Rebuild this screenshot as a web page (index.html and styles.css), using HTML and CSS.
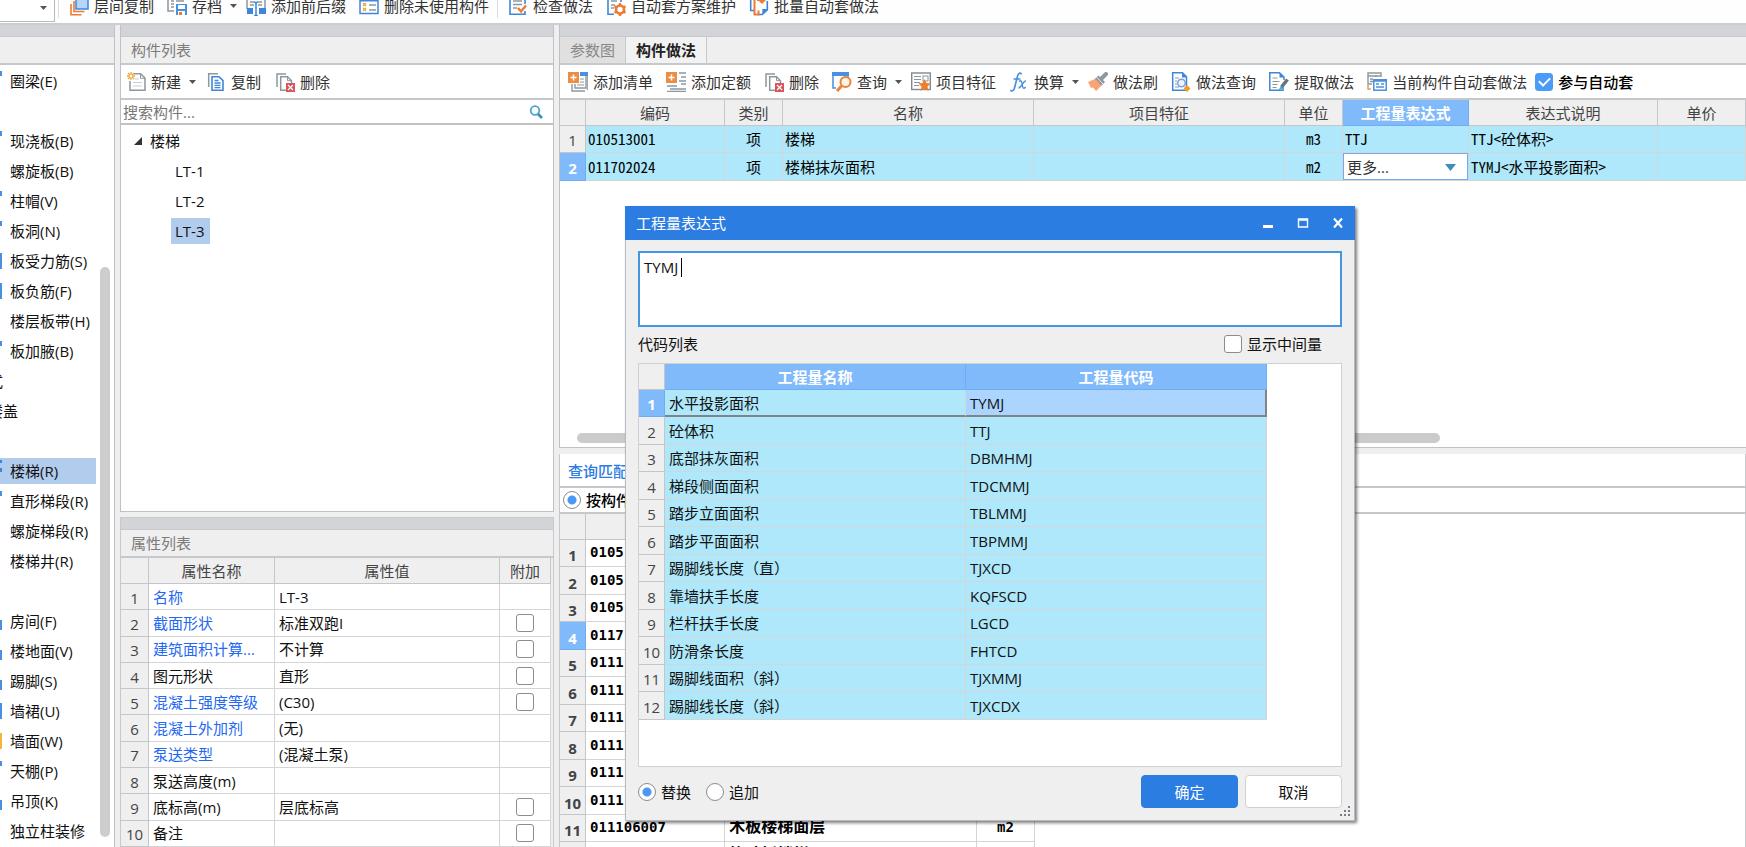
FILE: index.html
```html
<!DOCTYPE html>
<html lang="zh-CN">
<head>
<meta charset="utf-8">
<title>构件做法</title>
<link rel="stylesheet" href="styles.css">
</head>
<body>
<svg class="defs" aria-hidden="true">
  <symbol id="i-delete" viewBox="0 0 20 20"><path d="M2 15V2h9" fill="none" stroke="#8d979e" stroke-width="1.5"/><path d="M5.700 4.700h6.800l4 4v9.600H5.700z" fill="#fff" stroke="#8d979e" stroke-width="1.500"/><path d="M12.500 4.700v4h4" fill="none" stroke="#8d979e"/><rect x="11" y="11" width="9" height="9" fill="#d9535a"/><path d="M13 13l5 5m0-5l-5 5" stroke="#fff" stroke-width="1.200"/></symbol>
  <symbol id="i-caret" viewBox="0 0 7 4"><path d="M0 0h7L3.500 4z" fill="#555"/></symbol>
</svg>
<div class="app">
  <header class="topbar">
    <div class="combo"><svg class="caret"><use href="#i-caret"/></svg></div>
    <span class="sep"></span>
    <button class="tool"><svg class="icon" viewBox="0 0 20 20"><rect x="7" y="1" width="12" height="12" fill="#b5d5fa" stroke="#3f86da" stroke-width="1.500"/><path d="M5 5v10.500h10.500M2 8v10.800h10.500" fill="none" stroke="#ec7b35" stroke-width="1.600"/></svg>层间复制</button>
    <button class="tool has-menu"><svg class="icon" viewBox="0 0 20 20"><path d="M1 0v15h6M4 5h3M4 8h3M4 11h3M9 5h8" fill="none" stroke="#8d979e" stroke-width="1.500"/><rect x="9" y="8" width="11" height="11" fill="#4a8fe0"/><rect x="11" y="9" width="7" height="4" fill="#fff"/><rect x="11" y="15" width="7" height="4" fill="#fff"/><rect x="12" y="16" width="3" height="3" fill="#ec7b35"/></svg>存档<svg class="caret"><use href="#i-caret"/></svg></button>
    <button class="tool"><svg class="icon" viewBox="0 0 20 20"><path d="M1 0v13M4 6h4M4 9h4M19 0v12M12 6h4M12 9h4" stroke="#8d979e" stroke-width="1.500"/><path d="M1 12h6v6H1zM13 12h7v6h-7z" fill="#3f86da"/><path d="M8 6c2 0 2 1 2 2v10c0 1 0 2-2 2m4-14c-2 0-2 1-2 2v10c0 1 0 2 2 2" fill="none" stroke="#3f86da" stroke-width="1.500"/></svg>添加前后缀</button>
    <button class="tool"><svg class="icon" viewBox="0 0 20 20"><rect x="1" y="2" width="18" height="15.500" fill="#fff" stroke="#3f86da" stroke-width="1.500"/><path d="M1 4h18" stroke="#3f86da" stroke-width="3"/><path d="M10 9h7M10 14h7" stroke="#8d979e" stroke-width="1.500"/><path d="M4 7l3 3m0-3l-3 3M4 12l3 3m0-3l-3 3" stroke="#f0a030" stroke-width="1.200"/></svg>删除未使用构件</button>
    <span class="sep"></span>
    <button class="tool"><svg class="icon" viewBox="0 0 20 20"><path d="M2 0v18.300h15V15M17 0v8" fill="none" stroke="#3f86da" stroke-width="1.600"/><path d="M5 5h9M5 8.500h9M5 12h4" stroke="#8d979e" stroke-width="1.500"/><path d="M10 12l3 3.500 5-6" fill="none" stroke="#ec7b35" stroke-width="2.400"/></svg>检查做法</button>
    <button class="tool"><svg class="icon" viewBox="0 0 20 20"><path d="M2 0v18.300h6M15 0v6" fill="none" stroke="#3f86da" stroke-width="1.600"/><path d="M5 5h6M5 9h4M5 12h3" stroke="#8d979e" stroke-width="1.500"/><circle cx="14" cy="13.500" r="4" fill="none" stroke="#ec7b35" stroke-width="2.600"/><path d="M14 7v2.500M14 17.500V20M8.500 10.300l2 1.200M17.500 15.500l2 1.200M8.500 16.700l2-1.200M17.500 11.500l2-1.200" stroke="#ec7b35" stroke-width="2.400"/></svg>自动套方案维护</button>
    <button class="tool"><svg class="icon" viewBox="0 0 20 20"><path d="M1.700 0v14.500H5M18.300 5v9l-5 4.500H9" fill="none" stroke="#3f86da" stroke-width="1.600"/><path d="M18.500 13h-5.200v5.500z" fill="#3f86da"/><path d="M5.500 0v18.500h4v-4M8 4h7" fill="none" stroke="#ec7b35" stroke-width="2"/><path d="M13 0l4 4-4 4-4-4z" fill="#ec7b35"/></svg>批量自动套做法</button>
  </header>

  <main class="work">
    <nav class="cats">
      <div class="strip"></div>
      <div class="title"></div>
      <ul class="cat-list">
        <li><i class="chip top"></i>圈梁(E)</li>
        <li></li>
        <li><i class="chip top"></i>现浇板(B)</li>
        <li>螺旋板(B)</li>
        <li><i class="chip top"></i>柱帽(V)</li>
        <li><i class="chip top"></i>板洞(N)</li>
        <li><i class="chip full"></i>板受力筋(S)</li>
        <li><i class="chip full"></i>板负筋(F)</li>
        <li>楼层板带(H)</li>
        <li><i class="chip top"></i>板加腋(B)</li>
        <li class="group">装配式</li>
        <li class="group">空心楼盖</li>
        <li></li>
        <li class="on"><i class="chip dots"></i>楼梯(R)</li>
        <li><i class="chip top"></i>直形梯段(R)</li>
        <li>螺旋梯段(R)</li>
        <li>楼梯井(R)</li>
        <li></li>
        <li><i class="chip low"></i>房间(F)</li>
        <li><i class="chip low"></i>楼地面(V)</li>
        <li><i class="chip low"></i>踢脚(S)</li>
        <li><i class="chip full"></i>墙裙(U)</li>
        <li><i class="chip gold"></i>墙面(W)</li>
        <li><i class="chip top"></i>天棚(P)</li>
        <li><i class="chip low"></i>吊顶(K)</li>
        <li>独立柱装修</li>
      </ul>
      <span class="vbar"></span>
    </nav>

    <div class="mid">
      <section class="comps">
        <div class="strip"></div>
        <h2 class="title">构件列表</h2>
        <div class="tools wide">
          <button class="tool has-menu"><svg class="icon" viewBox="0 0 20 20"><path d="M4 9v9.300h15V6l-4.500-4.300H8" fill="#fff" stroke="#8d979e" stroke-width="1.500"/><path d="M14.500 2v4.300H19" fill="none" stroke="#8d979e"/><path d="M9 7h4M7 10.500h9M7 14h9" stroke="#c9ced2"/><path d="M5 0v8M1 4h8M2 1l6 6M8 1L2 7" stroke="#f0a030" stroke-width="1.300"/><circle cx="5" cy="4" r="1.500" fill="#fff"/></svg>新建<svg class="caret"><use href="#i-caret"/></svg></button>
          <button class="tool"><svg class="icon" viewBox="0 0 20 20"><path d="M2.700 15V1.700H12" fill="none" stroke="#8d979e" stroke-width="1.500"/><path d="M6 4.700h7l4 4v9.600H6z" fill="#fff" stroke="#3f86da" stroke-width="1.600"/><path d="M8.500 8.500h4M8.500 11h6M8.500 13.300h6M8.500 15.700h6" stroke="#3f86da" stroke-width="1.300"/></svg>复制</button>
          <button class="tool"><svg class="icon"><use href="#i-delete"/></svg>删除</button>
        </div>
        <label class="search"><input type="text" placeholder="搜索构件..." aria-label="搜索构件"><svg class="lens" viewBox="0 0 14 14"><circle cx="6" cy="5.500" r="4.300" fill="none" stroke="#4fa3cf" stroke-width="1.800"/><path d="M9 9l4 4" stroke="#3b8fbe" stroke-width="2.600"/></svg></label>
        <div class="tree">
          <div class="root"><svg class="tri" viewBox="0 0 8 8"><path d="M8 0v8H0z" fill="#333"/></svg>楼梯</div>
          <div class="leaf"><span>LT-1</span></div>
          <div class="leaf"><span>LT-2</span></div>
          <div class="leaf"><span class="on">LT-3</span></div>
        </div>
      </section>

      <section class="props">
        <div class="strip"></div>
        <h2 class="title">属性列表</h2>
        <div class="props-body">
        <table class="grid prop-grid">
          <colgroup><col class="w28"><col class="w126"><col><col class="w51"></colgroup>
          <thead><tr><th></th><th>属性名称</th><th>属性值</th><th>附加</th></tr></thead>
          <tbody>
            <tr><th>1</th><td class="link">名称</td><td>LT-3</td><td></td></tr>
            <tr><th>2</th><td class="link">截面形状</td><td>标准双跑I</td><td class="c"><input type="checkbox" aria-label="截面形状附加"></td></tr>
            <tr><th>3</th><td class="link">建筑面积计算...</td><td>不计算</td><td class="c"><input type="checkbox" aria-label="建筑面积计算附加"></td></tr>
            <tr><th>4</th><td>图元形状</td><td>直形</td><td class="c"><input type="checkbox" aria-label="图元形状附加"></td></tr>
            <tr><th>5</th><td class="link">混凝土强度等级</td><td>(C30)</td><td class="c"><input type="checkbox" aria-label="混凝土强度等级附加"></td></tr>
            <tr><th>6</th><td class="link">混凝土外加剂</td><td>(无)</td><td></td></tr>
            <tr><th>7</th><td class="link">泵送类型</td><td>(混凝土泵)</td><td></td></tr>
            <tr><th>8</th><td>泵送高度(m)</td><td></td><td></td></tr>
            <tr><th>9</th><td>底标高(m)</td><td>层底标高</td><td class="c"><input type="checkbox" aria-label="底标高附加"></td></tr>
            <tr><th>10</th><td>备注</td><td></td><td class="c"><input type="checkbox" aria-label="备注附加"></td></tr>
          </tbody>
        </table>
        </div>
      </section>
    </div>

    <div class="right">
      <section class="methods">
        <div class="strip"></div>
        <div class="tabs"><button class="tab">参数图</button><button class="tab current">构件做法</button></div>
        <div class="tools">
          <button class="tool"><svg class="icon" viewBox="0 0 20 20"><path d="M12 2h7.300v16" fill="none" stroke="#8d979e"/><path d="M12 0h8v4h-8z" fill="#4a8fe0"/><path d="M4 12v7h13M7 12v4h11V4" fill="none" stroke="#8d979e" stroke-width="1.400"/><path d="M12 7h4M12 10h4M9 13h7" stroke="#8d979e" stroke-width="1.200"/><rect width="11" height="11" fill="#ea8e45"/><path d="M5.500 2.500v6M2.500 5.500h6" stroke="#fff" stroke-width="1.500"/></svg>添加清单</button>
          <button class="tool"><svg class="icon" viewBox="0 0 20 20"><path d="M13 1h7M15 5h5M13 9h7M15 12h5M1 14h10M4 17h16M1 19.500h19" stroke="#8d979e" stroke-width="1.300"/><rect width="11" height="11" fill="#ea8e45"/><path d="M5.500 2.500v6M2.500 5.500h6" stroke="#fff" stroke-width="1.500"/></svg>添加定额</button>
          <button class="tool"><svg class="icon"><use href="#i-delete"/></svg>删除</button>
          <button class="tool has-menu"><svg class="icon" viewBox="0 0 20 20"><path d="M0 0h17v4H0z" fill="#4a8fe0"/><path d="M1 3v13h3M16 3v2" fill="none" stroke="#4a8fe0" stroke-width="1.500"/><circle cx="13.500" cy="10" r="5" fill="#fff3e6" stroke="#ec8139" stroke-width="2"/><path d="M9.500 14L5 19" stroke="#ec8139" stroke-width="3"/></svg>查询<svg class="caret"><use href="#i-caret"/></svg></button>
          <button class="tool"><svg class="icon" viewBox="0 0 20 20"><rect x=".7" y="1" width="18.600" height="16.500" fill="#fff" stroke="#7f8a91" stroke-width="1.400"/><path d="M3 4.500h7M3 7.500h7M3 10.500h6M3 13.500h5" stroke="#8d979e" stroke-width="1.200"/><rect x="12" y="4" width="5" height="5" fill="none" stroke="#8d979e"/><path d="M13.500 7l1.900 4.100 4.400.500-3.300 3 .9 4.400-3.900-2.200-3.900 2.200.9-4.400-3.300-3 4.400-.5z" fill="#ee7f2b"/></svg>项目特征</button>
          <button class="tool has-menu"><svg class="icon" viewBox="0 0 20 20"><path d="M12.500 2.500c-.3-2-3-2-3.800 1L5.500 16c-.6 3-3 3.800-4 2M4.500 7h7" fill="none" stroke="#4a8fe0" stroke-width="1.700"/><path d="M10 9.500c2-2 2.800 0 3.200 3 .4 3.500 1.500 5 3.300 2.500M17 9c-3-.5-4.500 7-7.500 7" fill="none" stroke="#4a8fe0" stroke-width="1.400"/></svg>换算<svg class="caret"><use href="#i-caret"/></svg></button>
          <button class="tool"><svg class="icon" viewBox="0 0 20 20"><path d="M0 10l8-3.500 6 6.500-6 6-3-3.500-2 .5z" fill="#fba277"/><path d="M7 6.500l3.500-3 6.500 6.500-3.500 3.500z" fill="#8d979e"/><path d="M13 7l5-5" stroke="#8d979e" stroke-width="4" stroke-linecap="round"/><path d="M8.500 5l6.500 7" stroke="#fff" stroke-width=".8"/></svg>做法刷</button>
          <button class="tool"><svg class="icon" viewBox="0 0 20 20"><path d="M1.700.8h9.800l4 4v13.500H1.700z" fill="#fff" stroke="#3f86da" stroke-width="1.500"/><path d="M11 .5l5 5h-5z" fill="#3f86da"/><path d="M4 6h4M4 9h2M4 12h2M4 15h4" stroke="#8d979e"/><circle cx="10.500" cy="11" r="3.800" fill="#eef4ff" stroke="#7f9fd8" stroke-width="1.500"/><path d="M16 13l3.500 3.500L16 20l-3.500-3.500z" fill="#f59a23"/></svg>做法查询</button>
          <button class="tool"><svg class="icon" viewBox="0 0 20 20"><path d="M14 14v4.300H.8V.8h9.700L15 5v3" fill="#fff" stroke="#3f86da" stroke-width="1.500"/><path d="M10.500.5l5 5h-5z" fill="#3f86da"/><path d="M3.500 6h5M3.500 9.500h7M3.500 12.500h5M3.500 15.500h4" stroke="#8d979e" stroke-width="1.200"/><path d="M18.500 7.500l-6 7.500" stroke="#66737b" stroke-width="3.500"/><path d="M12 14l-3 5 5-3z" fill="#33b0c8"/></svg>提取做法</button>
          <button class="tool"><svg class="icon" viewBox="0 0 20 20"><path d="M5 12H1V1h13v4M1 4h13M3 7h3M9 3v2M3 9.500h3" fill="none" stroke="#8d979e" stroke-width="1.400"/><path d="M1 13v4h3" fill="none" stroke="#ee9a50" stroke-width="1.500"/><rect x="6.800" y="7.800" width="12.400" height="10.400" fill="#fff" stroke="#4a8fe0" stroke-width="1.500"/><path d="M6 8.500h14" stroke="#4a8fe0" stroke-width="2.500"/><path d="M9 12h3M9 15h8M14 12h3" stroke="#4a8fe0" stroke-width="1.600"/></svg>当前构件自动套做法</button>
          <label class="check strong"><input type="checkbox" checked>参与自动套</label>
        </div>
        <table class="grid method-grid">
          <colgroup><col class="w26"><col class="w139"><col class="w58"><col class="w251"><col class="w251"><col class="w58"><col class="w126"><col class="w189"><col></colgroup>
          <thead><tr><th></th><th>编码</th><th>类别</th><th>名称</th><th>项目特征</th><th>单位</th><th class="hot">工程量表达式</th><th>表达式说明</th><th>单价</th></tr></thead>
          <tbody>
            <tr><th>1</th><td>010513001</td><td class="c">项</td><td>楼梯</td><td></td><td class="c">m3</td><td>TTJ</td><td>TTJ&lt;砼体积&gt;</td><td></td></tr>
            <tr><th class="hot">2</th><td>011702024</td><td class="c">项</td><td>楼梯抹灰面积</td><td></td><td class="c">m2</td><td class="edit"><div class="pick"><select aria-label="工程量表达式"><option>更多...</option></select><svg class="drop" viewBox="0 0 11 7"><path d="M0 0h11L5.500 7z" fill="#3f8db8"/></svg></div></td><td>TYMJ&lt;水平投影面积&gt;</td><td></td></tr>
          </tbody>
        </table>
        <span class="hbar"></span>
      </section>

      <section class="query">
        <div class="query-tabs"><button class="qtab">查询匹配</button></div>
        <div class="filter"><label class="check strong"><input type="radio" name="filter" checked>按构件</label></div>
        <table class="grid query-grid">
          <colgroup><col class="w26"><col class="w139"><col class="w251"><col class="w58"></colgroup>
          <thead><tr><th></th><th></th><th></th><th></th></tr></thead>
          <tbody>
            <tr><th>1</th><td>0105</td><td></td><td></td></tr>
            <tr><th>2</th><td>0105</td><td></td><td></td></tr>
            <tr><th>3</th><td>0105</td><td></td><td></td></tr>
            <tr><th class="hot">4</th><td>0117</td><td></td><td></td></tr>
            <tr><th>5</th><td>0111</td><td></td><td></td></tr>
            <tr><th>6</th><td>0111</td><td></td><td></td></tr>
            <tr><th>7</th><td>0111</td><td></td><td></td></tr>
            <tr><th>8</th><td>0111</td><td></td><td></td></tr>
            <tr><th>9</th><td>0111</td><td></td><td></td></tr>
            <tr><th>10</th><td>0111</td><td></td><td></td></tr>
            <tr><th>11</th><td>011106007</td><td class="name">木板楼梯面层</td><td class="c">m2</td></tr>
            <tr><th></th><td></td><td class="name">橡胶板楼梯面层</td><td></td></tr>
          </tbody>
        </table>
      </section>
    </div>
  </main>

  <div class="dialog" role="dialog" aria-label="工程量表达式">
    <div class="bar"><span class="bar-text">工程量表达式</span>
      <button class="win" aria-label="最小化"><svg viewBox="0 0 12 12"><path d="M1 9.500h10" stroke="#fff" stroke-width="3"/></svg></button>
      <button class="win" aria-label="最大化"><svg viewBox="0 0 12 12"><path d="M1.500 2h9v8h-9zM1.500 3h9" fill="none" stroke="#fff" stroke-width="1.400"/></svg></button>
      <button class="win" aria-label="关闭"><svg viewBox="0 0 12 12"><path d="M2 1.500l8 9M10 1.500l-8 9" stroke="#fff" stroke-width="2.200"/></svg></button>
    </div>
    <div class="body">
      <div class="expr"><textarea aria-label="表达式">TYMJ</textarea><span class="cursor"></span></div>
      <div class="caption"><span>代码列表</span><label class="check"><input type="checkbox">显示中间量</label></div>
      <div class="frame">
        <table class="grid code-grid">
          <colgroup><col class="w26"><col class="w301"><col class="w301"></colgroup>
          <thead><tr><th></th><th class="hot">工程量名称</th><th class="hot">工程量代码</th></tr></thead>
          <tbody>
            <tr class="picked"><th class="hot">1</th><td>水平投影面积</td><td class="sel">TYMJ</td></tr>
            <tr><th>2</th><td>砼体积</td><td>TTJ</td></tr>
            <tr><th>3</th><td>底部抹灰面积</td><td>DBMHMJ</td></tr>
            <tr><th>4</th><td>梯段侧面面积</td><td>TDCMMJ</td></tr>
            <tr><th>5</th><td>踏步立面面积</td><td>TBLMMJ</td></tr>
            <tr><th>6</th><td>踏步平面面积</td><td>TBPMMJ</td></tr>
            <tr><th>7</th><td>踢脚线长度（直）</td><td>TJXCD</td></tr>
            <tr><th>8</th><td>靠墙扶手长度</td><td>KQFSCD</td></tr>
            <tr><th>9</th><td>栏杆扶手长度</td><td>LGCD</td></tr>
            <tr><th>10</th><td>防滑条长度</td><td>FHTCD</td></tr>
            <tr><th>11</th><td>踢脚线面积（斜）</td><td>TJXMMJ</td></tr>
            <tr><th>12</th><td>踢脚线长度（斜）</td><td>TJXCDX</td></tr>
          </tbody>
        </table>
      </div>
      <div class="actions">
        <label class="check"><input type="radio" name="mode" checked>替换</label>
        <label class="check"><input type="radio" name="mode">追加</label>
        <span class="fill"></span>
        <button class="btn primary">确定</button>
        <button class="btn">取消</button>
      </div>
    </div>
    <svg class="grip" viewBox="0 0 10 10"><path d="M8 0h2v2H8zM8 4h2v2H8zM4 4h2v2H4zM8 8h2v2H8zM4 8h2v2H4zM0 8h2v2H0z" fill="#777c86"/></svg>
  </div>
</div>
</body>
</html>
```
FILE: styles.css
```css
* { box-sizing: border-box; }
body {
  margin: 0;
  font: 15px/20px "Open Sans", "Noto Sans CJK SC", sans-serif;
  color: #111;
  background: #efefef;
}
button, input, select, textarea { font: inherit; color: inherit; margin: 0; }
button { border: 0; padding: 0; background: none; white-space: nowrap; }
h2 { margin: 0; font: inherit; }
.defs { position: absolute; width: 0; height: 0; }
.app { position: relative; height: 100vh; overflow: hidden; display: flex; flex-direction: column; }

/* toolbars */
.topbar {
  flex: 0 0 25px; height: 25px;
  display: flex; align-items: flex-end; gap: 3px;
  padding-bottom: 5px;
  background: #fefefe;
  border-bottom: 2px solid #cbcdd0;
}
.combo {
  flex: 0 0 55px; height: 28px; margin-bottom: -4px;
  display: flex; align-items: center; justify-content: flex-end; padding-right: 7px;
  background: #fff; border: 1px solid #b9bbbd; border-left: 0;
}
.sep { width: 1px; height: 24px; background: #dcdcdc; margin: 0 2px 0 0; }
.tool { height: 24px; display: flex; align-items: center; gap: 5px; padding: 0 5px; color: #333; border-radius: 3px; }
.tool.has-menu { padding-right: 1px; }
.icon { width: 20px; height: 20px; flex: none; }
.caret { width: 7px; height: 4px; margin-left: 3px; }
.combo .caret { margin: 0; }
.tools {
  flex: 0 0 35px;
  display: flex; align-items: center; gap: 3px; padding-left: 3px;
  background: #fff; border-bottom: 2px solid #c6c9cc;
}
.tools.wide { gap: 4px; padding-left: 0; }

/* panes */
.work { flex: 1; min-height: 0; display: flex; gap: 5px; }
.strip { flex: 0 0 12px; background: #d3d4d8; border-bottom: 1px solid #c6c9cf; }
.title {
  flex: 0 0 28px; padding: 3px 10px;
  color: #7c7c7c; background: #efefef; border-bottom: 2px solid #c6c9cc;
}
.cats {
  position: relative; flex: 0 0 115px; overflow: hidden;
  display: flex; flex-direction: column;
  background: #fff; border-right: 1px solid #bfc1c4;
}
.cat-list { list-style: none; margin: 0; padding: 1px 18px 0 0; }
.cat-list li { height: 30px; display: flex; align-items: center; white-space: nowrap; padding-left: 10px; position: relative; }
.cat-list .group { margin-left: -42px; padding-left: 0; }
.cat-list .on { height: 26px; margin: 2px 0; background: #b1ccec; }
.chip { position: absolute; left: 0; width: 2px; height: 16px; }
.chip.top { height: 5px; top: 5px; background: #4a8fe0; }
.chip.full { background: #4a8fe0; }
.chip.dots { top: 2px; height: 12px; background: linear-gradient(#3f86da 3px, transparent 3px 8px, #3f86da 8px); }
.chip.low { height: 10px; top: 14px; background: #4a8fe0; }
.chip.gold { background: #f5b638; }
.vbar { position: absolute; right: 4px; top: 242px; bottom: 10px; width: 10px; border-radius: 5px; background: #cdcdcd; }

.mid { flex: 0 0 434px; display: flex; flex-direction: column; gap: 5px; min-height: 0; }
.comps {
  flex: 0 0 487px; display: flex; flex-direction: column;
  background: #fff; border: 1px solid #bfc1c4; border-top: 0;
}
.search { flex: 0 0 25px; display: flex; align-items: center; padding-right: 10px; border-bottom: 2px solid #bfc1c3; }
.search input { flex: 1; height: 22px; border: 0; padding: 0 2px; outline: 0; background: none; }
.search input::placeholder { color: #777; opacity: 1; }
.lens { width: 14px; height: 14px; }
.tree { padding-top: 1px; }
.root, .leaf { height: 30px; display: flex; align-items: center; }
.root { padding-left: 13px; gap: 8px; }
.tri { width: 8px; height: 8px; }
.leaf { padding-left: 50px; }
.leaf span { padding: 3px 5px 3px 4px; }
.leaf .on { background: #b1ccec; }

.props { flex: 1; min-height: 0; display: flex; flex-direction: column; border: 1px solid #c6c9cf; border-bottom: 0; }
.props-body { flex: 1; min-height: 0; padding-right: 2px; }

/* grids */
.grid { table-layout: fixed; border-collapse: separate; border-spacing: 0; width: 100%; background: #fff; }
.grid th, .grid td {
  padding: 0 4px; white-space: nowrap; overflow: hidden; text-align: left;
  border-right: 1px solid #d3d5d7; border-bottom: 1px solid #d3d5d7;
}
.grid th { padding: 0; text-align: center; font-weight: 400; color: #444; background: #efefef; border-color: #c4c7ca; }
.grid tbody th { padding-top: 2px; }
.grid th.hot { color: #fff; font-weight: 700; background: #80bafb; border-color: #6eadf3; }
.grid thead th { height: 26px; }
.grid td.c { text-align: center; }
.grid tbody tr { height: 27px; }
.grid tbody tr:nth-child(even) { height: 28px; }
.w26 { width: 26px; } .w28 { width: 28px; } .w51 { width: 51px; } .w58 { width: 58px; }
.w126 { width: 126px; } .w139 { width: 139px; } .w189 { width: 189px; }
.w251 { width: 251px; } .w301 { width: 301px; }

.prop-grid { height: 100%; }
.grid.prop-grid tbody tr { height: 26px; }
.prop-grid .link { color: #2468f2; }
.prop-grid td input { display: block; margin: 0 auto; }

.method-grid td, .code-grid td { background: #aee8fa; }
.method-grid td { padding: 0 2px; font-family: "Noto Sans Mono CJK SC", "Noto Sans CJK SC", monospace; color: #000; }
.method-grid td.edit { padding: 0; background: #fff; }
.pick { position: relative; height: 27px; border: 1px solid #6eadf3; }
.pick select {
  width: 100%; height: 25px; padding: 0 3px; border: 0; outline: 0;
  appearance: none; background: #fff; color: #333;
  font-family: "Open Sans", "Noto Sans CJK SC", sans-serif;
}
.drop { position: absolute; right: 11px; top: 10px; width: 11px; height: 7px; pointer-events: none; }

/* right side */
.right { flex: 1; min-width: 0; display: flex; flex-direction: column; gap: 6px; }
.methods {
  position: relative; flex: 0 0 423px; display: flex; flex-direction: column;
  background: #fff; border-left: 1px solid #bfc1c4; border-bottom: 1px solid #bfc1c4;
}
.tabs { flex: 0 0 28px; display: flex; background: #efefef; border-bottom: 2px solid #c6c9cc; }
.tab { padding: 0 10px; color: #888; background: #e0e0e0; border-right: 1px solid #c6c9cc; }
.tab.current { color: #222; font-weight: 700; background: #f2f2f2; }
.hbar { position: absolute; left: 17px; bottom: 4px; width: 863px; height: 10px; border-radius: 5px; background: #cbcbcb; }
.query {
  flex: 1; min-height: 0; overflow: hidden;
  background: #fff; border-left: 1px solid #c6c9cc; border-right: 1px solid #c6c9cc;
}
.query-tabs { height: 34px; display: flex; border-bottom: 2px solid #c6c9cc; }
.qtab { padding: 2px 8px 0; color: #2b7de1; font-weight: 500; }
.filter { height: 26px; display: flex; align-items: center; padding-left: 3px; border-bottom: 2px solid #c6c9cc; }
.query-grid { width: 475px; }
.query-grid tbody th { padding-top: 4px; font-weight: 700; }
.query-grid td { padding-bottom: 2px; font: bold 14px/20px "DejaVu Sans Mono", "Noto Sans CJK SC", monospace; color: #000; }
.query-grid td.name { font-size: 16px; }

/* form controls */
.check { display: flex; align-items: center; gap: 5px; white-space: nowrap; }
.check.strong { font-weight: 500; color: #000; }
input[type="checkbox"], input[type="radio"] {
  appearance: none; flex: none; width: 18px; height: 18px;
  border: 1px solid #8c8c8c; border-radius: 3px; background: #fff;
}
input[type="radio"] { border-radius: 50%; }
input[type="radio"]:checked { background: radial-gradient(circle, #4a98f7 4px, #fff 5px); }
input[type="checkbox"]:checked {
  border-color: #4b9bf8;
  background: linear-gradient(#4b9bf8, #4b9bf8);
  display: grid; place-items: center;
}
input[type="checkbox"]:checked::before {
  content: ""; width: 9px; height: 5px; margin-bottom: 3px;
  border: solid #fff; border-width: 0 0 2px 2px; transform: rotate(-45deg);
}

/* dialog */
.dialog {
  position: absolute; left: 625px; top: 206px; width: 730px;
  background: #efefef; border: 1px solid #b4bac6; border-top: 0;
  box-shadow: 2px 2px 3px rgba(0, 0, 0, .5);
}
.bar { height: 34px; display: flex; align-items: center; gap: 23px; padding: 0 11px; margin: 0 -1px; background: #2b7de1; color: #fff; }
.bar-text { flex: 1; }
.win, .win svg { width: 12px; height: 12px; display: block; }
.body { padding: 11px 12px 12px; display: flex; flex-direction: column; }
.expr { position: relative; display: flex; }
.expr textarea { flex: 1; height: 76px; padding: 4px; border: 2px solid #4397e0; outline: 0; resize: none; background: #fff; }
.cursor { position: absolute; left: 43px; top: 7px; width: 1px; height: 19px; background: #000; }
.caption { height: 36px; display: flex; align-items: center; justify-content: space-between; padding: 0 20px 2px 0; }
.frame { height: 404px; background: #fff; border: 1px solid #cfd1d3; }
.code-grid { width: 628px; }
.picked td { border-bottom: 2px solid #7f8487; }
.picked td.sel { background: #abd5fe; border-right: 2px solid #7f8487; }
.actions { display: flex; align-items: center; gap: 7px; padding-top: 8px; }
.actions .check { margin-right: 8px; }
.fill { flex: 1; }
.btn { width: 97px; height: 33px; border: 1px solid #cfd1d3; border-radius: 4px; background: #fff; }
.btn.primary { color: #fff; background: #2b7de1; border-color: #2b7de1; }
.grip { position: absolute; right: 4px; bottom: 4px; width: 10px; height: 10px; }
```
